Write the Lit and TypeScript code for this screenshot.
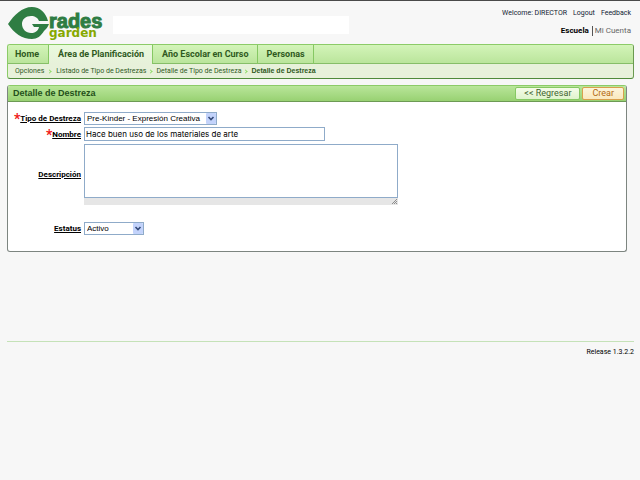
import { LitElement, html, css } from "lit";
import { customElement, property, state } from "lit/decorators.js";
import { classMap } from "lit/directives/class-map.js";

@customElement("site-logo")
class SiteLogo extends LitElement {
  static styles = css`
    :host { display: block; line-height: 0; }
    text { font-family: "Liberation Sans", sans-serif; font-weight: 700; }
    .word { font-size: 20px; fill: #2f7d43; stroke: #2f7d43; stroke-width: 1px; }
    .sub { font-family: "DejaVu Sans", sans-serif; font-size: 12px; fill: #86a800; }
  `;
  render() {
    return html`<svg width="98" height="36" viewBox="0 0 98 36" role="img" aria-label="Grades garden">
      <path fill="#2f7d43" d="M0 17 C6 8 14 0 24 0 C32 0 38 6 40 14 L31 14 C30 11 27 9 23 9 C18 9 14 12 14 17 C14 22 18 26 23 26 C27 26 30 24 31 20 L26 20 L24 17 L41 17 C40 20 38 22 36 24 C33 29 29 32 24 32 C14 32 6 26 0 17 Z" />
      <text class="word" x="41" y="21">rades</text>
      <text class="sub" x="41" y="30">garden</text>
    </svg>`;
  }
}

@customElement("app-root")
class AppRoot extends LitElement {
  @property() release = "Release 1.3.2.2";
  @state() private active = 1;

  private tabs = ["Home", "Área de Planificación", "Año Escolar en Curso", "Personas"];
  private crumbs = ["Opciones", "Listado de Tipo de Destrezas", "Detalle de Tipo de Destreza", "Detalle de Destreza"];

  static styles = css`
    :host {
      display: block;
      min-height: 100vh;
      box-sizing: border-box;
      padding: 0 6px 0 7px;
      border-top: 1px solid #4a4a4a;
      background: #f7f7f7;
      font-family: Roboto, "Liberation Sans", sans-serif;
      font-size: 8px;
      color: #000;
    }
    a { color: inherit; text-decoration: none; }
    .top { display: flex; height: 43px; }
    site-logo { margin: 6px 7px 0 1px; }
    .banner { width: 236px; height: 18px; margin-top: 15px; background: #fff; }
    .user { margin-left: auto; padding: 7px 3px 0 0; text-align: right; }
    .links { display: flex; justify-content: flex-end; gap: 6px; font-size: 7px; line-height: 10px; color: #123; }
    .areas { display: flex; justify-content: flex-end; margin-top: 8px; line-height: 10px; }
    .areas .current { font-weight: 700; padding-right: 3px; }
    .areas .other { color: #666; border-left: 1px solid #555; padding-left: 2px; }

    .nav {
      border: 1px solid #8ccb68;
      border-right-color: #6a9a50;
      border-bottom: 1px solid #4f8a3a;
      border-radius: 3px;
      background: #e7f1da;
      color: #2f5a1e;
      overflow: hidden;
    }
    .tabs { display: flex; background: linear-gradient(#d3f4b9, #b9e49a); box-shadow: inset 0 -1px #86be68; }
    .tab {
      padding: 0 8px 0 9px;
      line-height: 19px;
      font-size: 9px;
      font-weight: 700;
      border-right: 1px solid #86c863;
    }
    .tab:first-child { padding: 0 9px 0 7px; }
    .tab.on { background: linear-gradient(#e9fadd, #e7f1da); }
    .crumbs { display: flex; padding: 0 7px; line-height: 14px; font-size: 7px; }
    .crumbs a + a { display: flex; align-items: center; }
    .crumbs a + a::before {
      content: "";
      width: 2px;
      height: 2px;
      margin: 0 5px 0 4px;
      border: solid #8fdc68;
      border-width: 1px 1px 0 0;
      transform: rotate(45deg);
    }
    .crumbs a:nth-child(n + 3)::before { margin: 0 4px 0 3px; }
    .crumbs .here { font-family: "Liberation Sans", sans-serif; font-weight: 700; }

    .panel {
      margin: 6px 7px 0 0;
      border: 1px solid #7d8580;
      border-top-color: #8ccb68;
      border-radius: 3px;
      background: #fff;
      overflow: hidden;
    }
    .head {
      display: flex;
      align-items: center;
      gap: 2px;
      height: 15px;
      padding: 0 2px 0 5px;
      background: linear-gradient(#b9e69a, #98d172);
      border-bottom: 1px solid #6d9a55;
    }
    h1 { margin: 0 auto 0 0; font-size: 9px; line-height: 15px; font-family: "Liberation Sans", sans-serif; color: #24501a; }
    button {
      height: 13px;
      padding: 0 8px;
      border: 1px solid #86c863;
      border-radius: 2px;
      background: linear-gradient(#f5fbe9, #dff3cc);
      font: 9px/11px Roboto, sans-serif;
      color: #42652f;
    }
    button.create { padding: 0 9px; border-color: #d9a04c; background: linear-gradient(#fdf5dc, #fae8bf); color: #b36a12; }

    .form {
      display: grid;
      grid-template-columns: 73px minmax(0, 1fr);
      align-items: center;
      column-gap: 3px;
      padding: 10px 8px 16px 0;
    }
    .form label { text-align: right; font-weight: 700; line-height: 10px; white-space: nowrap; }
    .form u { text-underline-offset: 1px; }
    .req { color: #f01818; font-size: 14px; line-height: 8px; vertical-align: -3px; font-weight: 700; }
    input, select, textarea {
      box-sizing: border-box;
      display: block;
      margin: 0;
      border: 1px solid #8fabc9;
      border-radius: 0;
      background: #fff;
      font: 8px/12px Inter, "Liberation Sans", sans-serif;
      color: #000;
    }
    .pick { position: relative; width: max-content; }
    select { appearance: none; height: 13px; padding: 0 0 0 2px; font-family: "Liberation Sans", sans-serif; line-height: 11px; }
    .kind { width: 133px; }
    .status { width: 60px; }
    .pick svg { position: absolute; right: 1px; top: 1px; pointer-events: none; }
    input { width: 241px; height: 14px; padding: 0 1px; margin: 2px 0 3px; }
    .area { width: 314px; max-width: 100%; margin-bottom: 17px; }
    textarea { width: 100%; height: 54px; resize: none; }
    .grip { display: flex; justify-content: flex-end; height: 7px; background: #e6e6e6; }
    .desc { padding-bottom: 17px; }

    footer {
      margin-top: 89px;
      padding: 5px 0;
      border-top: 1px solid #c5e2b8;
      text-align: right;
      font-size: 7px;
      line-height: 10px;
    }
  `;

  private arrow() {
    return html`<svg width="10" height="11" viewBox="0 0 10 11" aria-hidden="true">
      <rect width="10" height="11" rx="1" fill="#c3d3fb" /><path d="M2.500 4 L5 6.500 L7.500 4" fill="none" stroke="#344a78" stroke-width="1.600" />
    </svg>`;
  }

  render() {
    return html`
      <header class="top">
        <site-logo></site-logo>
        <div class="banner"></div>
        <div class="user">
          <div class="links"><span>Welcome: DIRECTOR</span><a href="#">Logout</a><a href="#">Feedback</a></div>
          <div class="areas"><a class="current" href="#">Escuela</a><a class="other" href="#">Mi Cuenta</a></div>
        </div>
      </header>
      <nav class="nav">
        <div class="tabs">
          ${this.tabs.map((t, i) => html`<a href="#" class=${classMap({ tab: true, on: i === this.active })} @click=${() => (this.active = i)}>${t}</a>`)}
        </div>
        <div class="crumbs">
          ${this.crumbs.map((c, i) => html`<a href="#" class=${classMap({ here: i === this.crumbs.length - 1 })}>${c}</a>`)}
        </div>
      </nav>
      <main class="panel">
        <div class="head">
          <h1>Detalle de Destreza</h1>
          <button type="button">&lt;&lt; Regresar</button>
          <button type="submit" form="skill" class="create">Crear</button>
        </div>
        <form class="form" id="skill">
          <label for="kind"><span class="req">*</span><u>Tipo de Destreza</u></label>
          <div class="pick">
            <select id="kind" class="kind"><option>Pre-Kinder - Expresión Creativa</option></select>${this.arrow()}
          </div>
          <label for="name"><span class="req">*</span><u>Nombre</u></label>
          <input id="name" type="text" value="Hace buen uso de los materiales de arte" />
          <label for="desc" class="desc"><u>Descripción</u></label>
          <div class="area">
            <textarea id="desc"></textarea>
            <div class="grip">
              <svg width="7" height="7" viewBox="0 0 7 7" aria-hidden="true"><path d="M1 6 L6 1 M3 6 L6 3 M5 6 L6 5" stroke="#777" stroke-width=".8" /></svg>
            </div>
          </div>
          <label for="status"><u>Estatus</u></label>
          <div class="pick">
            <select id="status" class="status"><option>Activo</option><option>Inactivo</option></select>${this.arrow()}
          </div>
        </form>
      </main>
      <footer>${this.release}</footer>
    `;
  }
}
